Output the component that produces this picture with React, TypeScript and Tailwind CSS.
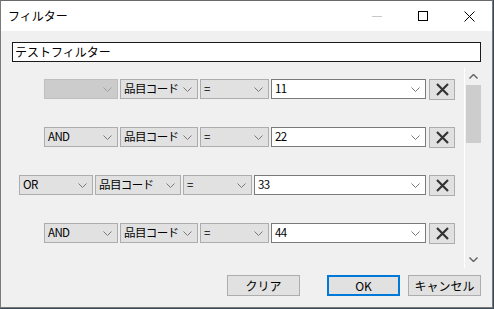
import React from "react";

const font = { fontFamily: '"Noto Sans CJK JP", "Liberation Sans", sans-serif' };

const Chevron: React.FC<{ color?: string }> = ({ color = "#808080" }) => (
  <svg width="9" height="5" viewBox="0 0 9 5" className="shrink-0">
    <path d="M0.5 0.5 L4.5 4.5 L8.5 0.5" fill="none" stroke={color} strokeWidth="1" />
  </svg>
);

interface IComboProps {
  text?: string;
  className: string;
  disabled?: boolean;
  white?: boolean;
}

const Combo: React.FC<IComboProps> = ({ text, className, disabled, white }) => (
  <div
    className={`h-[20px] border flex items-center justify-between pl-[3px] pr-[5px] text-[11.5px] text-black whitespace-nowrap overflow-hidden ${
      white
        ? "bg-white border-[#7a7a7a]"
        : disabled
        ? "bg-[#cccccc] border-[#bfbfbf]"
        : "bg-[#e1e1e1] border-[#adadad]"
    } ${className}`}
  >
    <span className="leading-none tracking-[-0.6px]">{text}</span>
    <Chevron color={disabled ? "#a0a0a0" : "#7a7a7a"} />
  </div>
);

const DeleteButton: React.FC = () => (
  <div className="w-[26px] h-[21px] bg-[#e1e1e1] border border-[#adadad] flex items-center justify-center">
    <svg width="13" height="13" viewBox="0 0 13 13">
      <path d="M1 1 L12 12 M12 1 L1 12" stroke="#333333" strokeWidth="2.2" />
    </svg>
  </div>
);

interface IRowProps {
  pad: string;
  logic: string;
  logicDisabled?: boolean;
  value: string;
  w2: string;
  w4: string;
}

const FilterRow: React.FC<IRowProps> = ({ pad, logic, logicDisabled, value, w2, w4 }) => (
  <div className={`flex items-start h-[21px] ${pad}`}>
    <Combo text={logic} disabled={logicDisabled} className="w-[74px]" />
    <Combo text="品目コード" className={`${w2} ml-[2px]`} />
    <Combo text="=" className="w-[69px] ml-[2px]" />
    <Combo text={value} white className={`${w4} ml-[2px]`} />
    <div className="ml-[3px]">
      <DeleteButton />
    </div>
  </div>
);

const Button: React.FC<{ label: string; primary?: boolean }> = ({ label, primary }) => (
  <div
    className={`w-[73px] h-[21px] bg-[#e1e1e1] flex items-center justify-center text-[12px] text-black ${
      primary ? "border-2 border-[#0078d7]" : "border border-[#adadad]"
    }`}
  >
    {label}
  </div>
);

const App: React.FC = () => {
  return (
    <div className="w-[494px] h-[309px] bg-[#3a4a5a]" style={font}>
      <div className="w-[493px] h-[308px] border border-[#7a7a7a] border-t-[#6a6a6a] bg-[#f0f0f0] flex flex-col">
        {/* title bar */}
        <div className="h-[30px] bg-white flex items-center shrink-0">
          <div className="pl-[7px] text-[12px] text-black flex-1">フィルター</div>
          <div className="w-[46px] h-full flex items-center justify-center">
            <div className="w-[10px] h-[1px] bg-[#c8c8c8]" />
          </div>
          <div className="w-[46px] h-full flex items-center justify-center">
            <div className="w-[10px] h-[10px] border border-black" />
          </div>
          <div className="w-[46px] h-full flex items-center justify-center">
            <svg width="11" height="11" viewBox="0 0 11 11">
              <path d="M0.5 0.5 L10.5 10.5 M10.5 0.5 L0.5 10.5" stroke="#000" strokeWidth="1" />
            </svg>
          </div>
        </div>

        <div className="flex flex-col px-[11px]">
          {/* name */}
          <div className="mt-[11px] h-[20px] bg-white border border-[#1a1a1a] flex items-center pl-[2px] text-[12px] text-black">
            テストフィルター
          </div>

          {/* conditions */}
          <div className="mt-[6px] h-[200px] flex">
            <div className="flex-1 flex flex-col pt-[11px] gap-[27px]">
              <FilterRow pad="pl-[32px]" logic="" logicDisabled value="11" w2="w-[78px]" w4="w-[155px]" />
              <FilterRow pad="pl-[32px]" logic="AND" value="22" w2="w-[78px]" w4="w-[155px]" />
              <FilterRow pad="pl-[7px]" logic="OR" value="33" w2="w-[86px]" w4="w-[172px]" />
              <FilterRow pad="pl-[32px]" logic="AND" value="44" w2="w-[78px]" w4="w-[155px]" />
            </div>
            <div className="w-[17px] border-l border-white flex flex-col items-center">
              <div className="h-[17px] flex items-center justify-center">
                <svg width="9" height="5" viewBox="0 0 9 5">
                  <path d="M0.5 4.5 L4.5 0.5 L8.5 4.5" fill="none" stroke="#606060" strokeWidth="1.4" />
                </svg>
              </div>
              <div className="w-[15px] h-[58px] bg-[#cdcdcd]" />
              <div className="flex-1" />
              <div className="h-[17px] flex items-center justify-center">
                <svg width="9" height="5" viewBox="0 0 9 5">
                  <path d="M0.5 0.5 L4.5 4.5 L8.5 0.5" fill="none" stroke="#606060" strokeWidth="1.4" />
                </svg>
              </div>
            </div>
          </div>

          {/* buttons */}
          <div className="mt-[7px] flex justify-end">
            <Button label="クリア" />
            <div className="ml-[27px]">
              <Button label="OK" primary />
            </div>
            <div className="ml-[8px]">
              <Button label="キャンセル" />
            </div>
          </div>
        </div>
      </div>
    </div>
  );
};

export default App;
